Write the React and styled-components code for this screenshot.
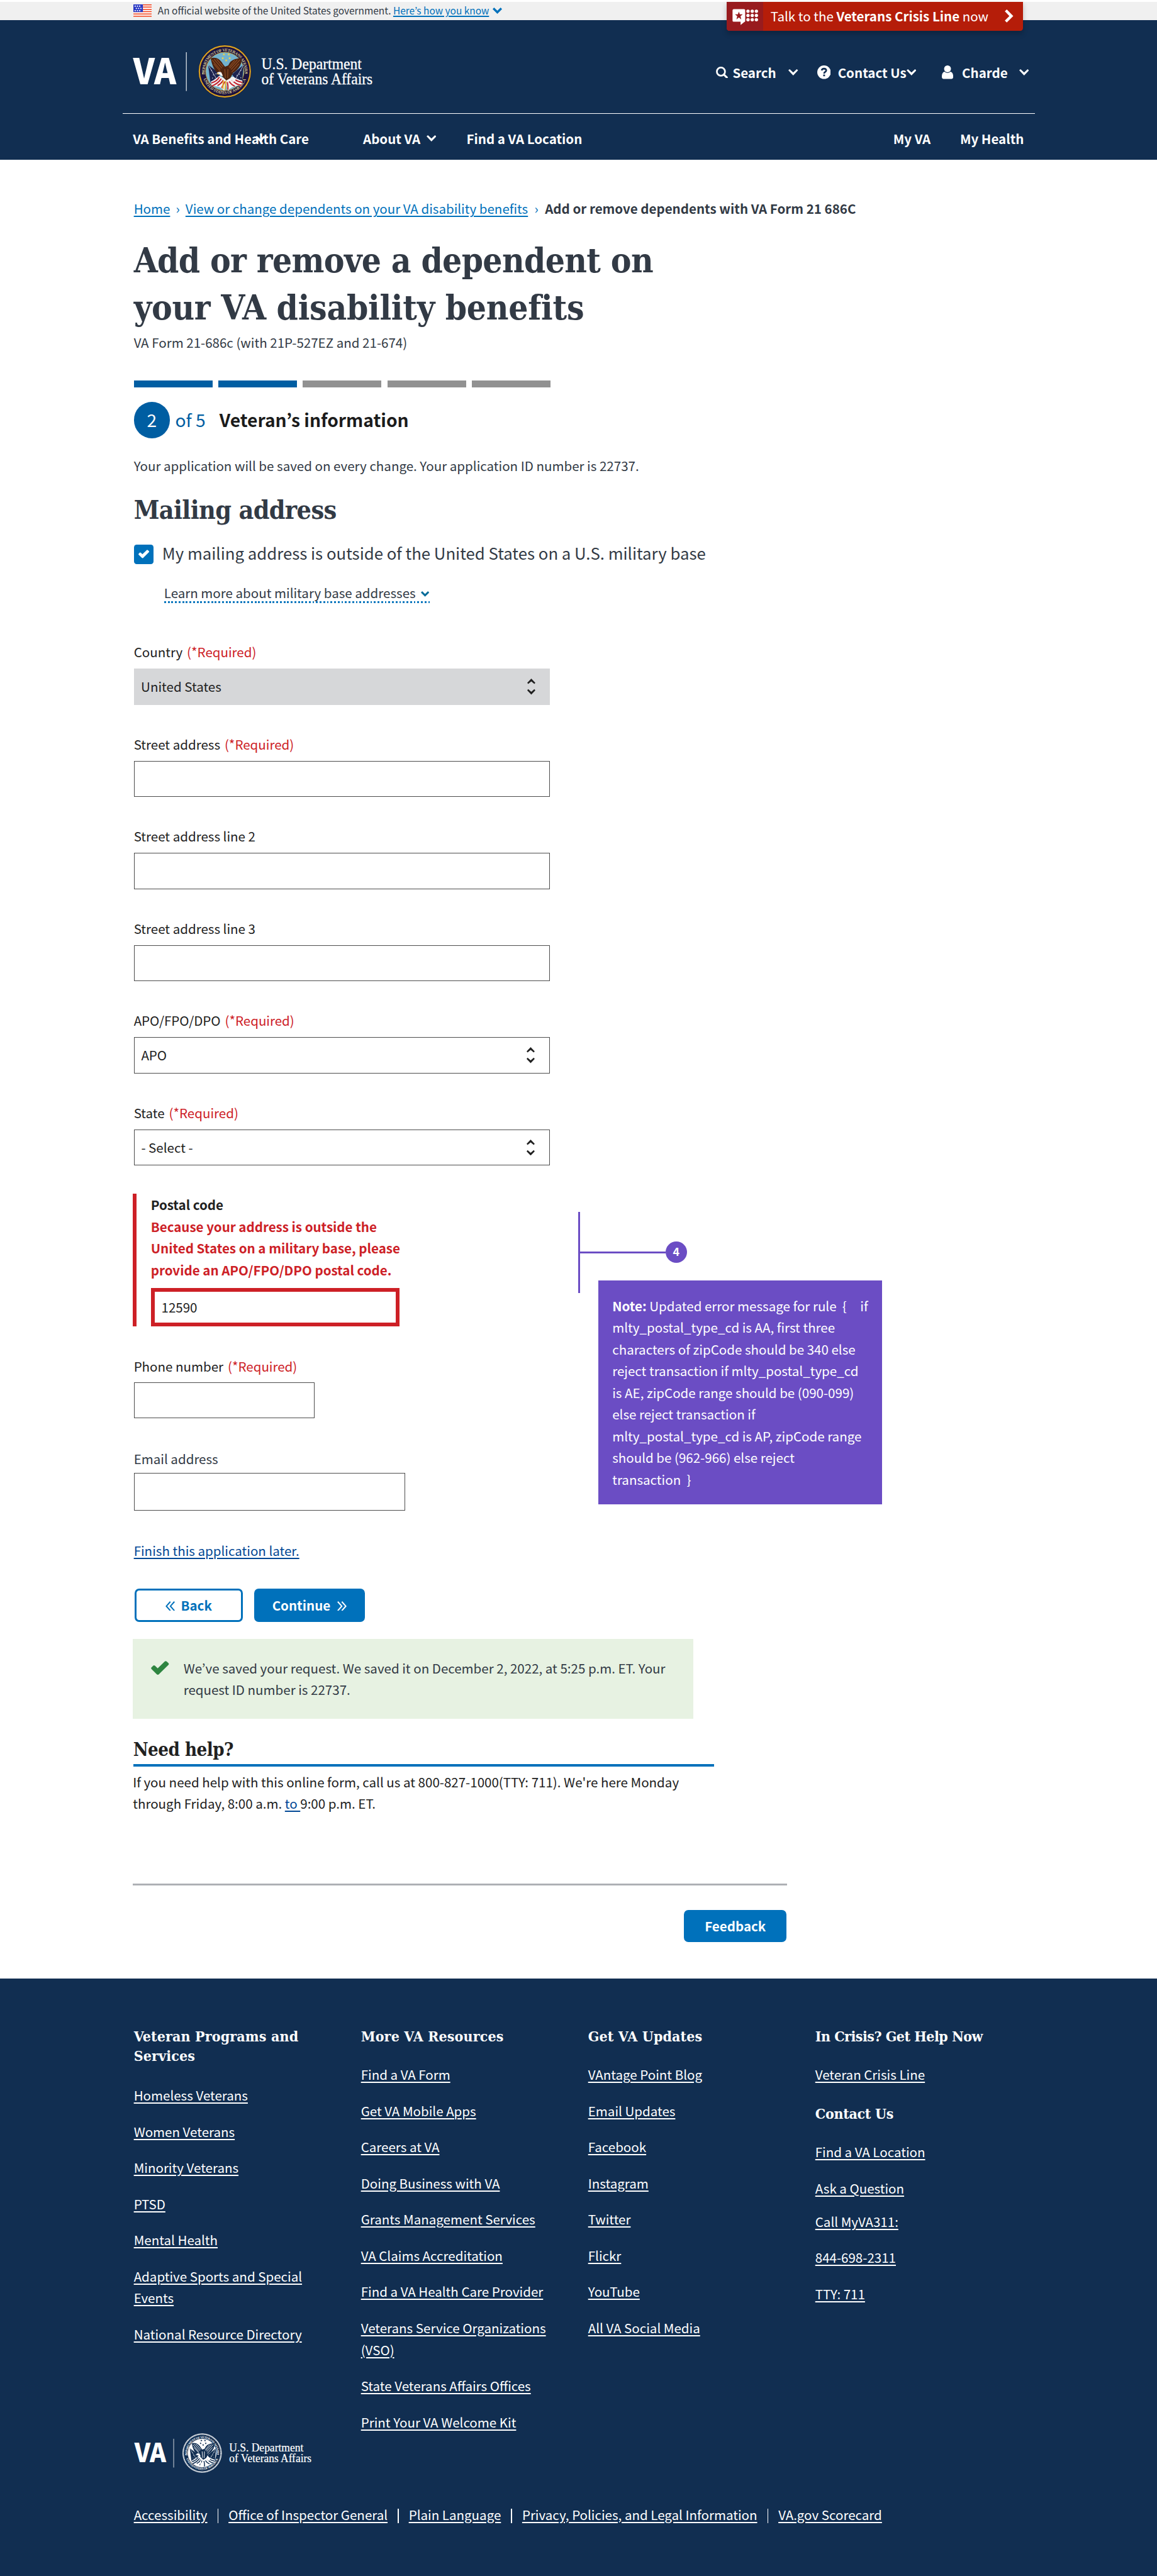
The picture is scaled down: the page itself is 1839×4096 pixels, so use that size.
import React from "react";
import styled, { createGlobalStyle, css } from "styled-components";

/* One rem is ten layout pixels of the 1280-wide page grid. */
const GlobalStyle = createGlobalStyle`
  html { font-size: calc(1839px / 128); }
  body { margin: 0; background: #fff; }
  *, *::before, *::after { box-sizing: border-box; }
`;

const sans = '"Noto Sans CJK KR", "Noto Sans", sans-serif';
const slab = '"DejaVu Serif Condensed", "DejaVu Serif", serif';
const navy = "#112e51";
const blue = "#0071bb";
const ink = "#323a45";
const red = "#cd2026";
const purple = "#6b4dc4";

const Page = styled.div`
  width: 128rem;
  height: 4096px;
  overflow: hidden;
  display: flex;
  flex-direction: column;
  font: 400 1.43rem/2.4rem ${sans};
  color: ${ink};
  white-space: nowrap;
`;

const underlined = css`
  text-decoration: underline;
  text-decoration-thickness: 0.105rem;
  text-underline-offset: 0.19rem;
`;

/* ---------- Official banner ---------- */
const Banner = styled.div`
  flex: none;
  display: flex;
  align-items: center;
  height: 2rem;
  margin-top: 0.2rem;
  padding: 0 0 0.06rem 14.74rem;
  background: #f0f0f0;
  font-size: 1.075rem;
  line-height: 1.8rem;
  svg { display: block; flex: none; }
`;
const BannerText = styled.span`margin-left: 0.7rem; white-space: pre;`;
const BannerLink = styled.a`color: ${blue}; ${underlined} text-underline-offset: 0.12rem; margin-right: 0.4rem;`;

const CrisisLine = styled.a`
  position: absolute;
  top: 0.2rem;
  left: 80.4rem;
  width: 32.8rem;
  height: 3.2rem;
  display: flex;
  align-items: center;
  background: #b51d09;
  color: #fff;
  border-radius: 0 0 0.3rem 0.3rem;
  box-shadow: 0 0.3rem 0.6rem rgba(0, 0, 0, 0.22);
  overflow: hidden;
`;
const CrisisBadge = styled.span`
  width: 4rem;
  height: 100%;
  margin-right: 0.85rem;
  background: #981b1e;
  svg { display: block; }
`;
const CrisisText = styled.span`flex: 1; padding-bottom: 0.06rem;`;
const CrisisArrow = styled.span`margin-right: 1.1rem; svg { display: block; }`;

/* ---------- Header ---------- */
const Header = styled.header`
  flex: none;
  height: 15.5rem;
  background: ${navy};
  color: #fff;
  font-weight: 700;
`;
const Masthead = styled.div`
  display: flex;
  align-items: center;
  height: 10.3rem;
  padding: 1.2rem 0 0 14.7rem;
`;
const Tools = styled.div`display: flex; align-items: center; margin: 0.12rem 0 0 37.9rem;`;
const Tool = styled.a`display: flex; align-items: center; width: ${p => p.$width}rem; svg { display: block; flex: none; }`;
const ToolLabel = styled.span`width: ${p => p.$width}rem; margin-left: ${p => p.$gap}rem; flex: none;`;
const Rule = styled.div`height: 0.11rem; margin: 0 13.5rem 0 13.6rem; background: #fff;`;
const Nav = styled.nav`
  display: flex;
  align-items: center;
  height: 5.1rem;
  padding: 0.35rem 0 0 14.7rem;
`;
const NavItem = styled.a`
  position: relative;
  display: flex;
  align-items: center;
  width: ${p => p.$width}rem;
  flex: none;
`;
const NavLabel = styled.span`width: ${p => p.$width ? p.$width + "rem" : "auto"};`;
const OverlaidChevron = styled.span`position: absolute; left: 13.55rem; top: 0.9rem; svg { display: block; }`;

/* ---------- Main ---------- */
const Main = styled.main`flex: none; height: 201.3rem; padding: 4.17rem 0 0 14.8rem;`;
const Breadcrumbs = styled.div`display: flex; height: 2.4rem;`;
const Crumb = styled.a`color: ${blue}; ${underlined}`;
const CrumbSeparator = styled.span`width: ${p => p.$width}rem; text-align: center; color: ${blue};`;
const CurrentCrumb = styled.span`font-weight: 700;`;
const Title = styled.h1`
  margin: 1.97rem 0 0;
  font: 700 3.8rem/5.2rem ${slab};
`;
const TitleLine = styled.span`display: block; letter-spacing: ${p => p.$tracking}rem;`;
const Subtitle = styled.div`margin-top: 0.03rem;`;
const Progress = styled.div`display: flex; gap: 0.64rem; margin-top: 3.03rem;`;
const Segment = styled.div`width: 8.71rem; height: 0.8rem; background: ${p => p.$done ? "#005ea2" : "#919191"};`;
const StepRow = styled.div`
  display: flex;
  align-items: center;
  margin-top: 1.59rem;
  height: 4rem;
  font-size: 1.965rem;
`;
const StepNumber = styled.span`
  width: 4rem;
  height: 4rem;
  border-radius: 50%;
  background: #005ea2;
  color: #fff;
  line-height: 3.9rem;
  text-align: center;
`;
const StepTotal = styled.span`width: 4.9rem; margin-left: 0.58rem; padding-bottom: 0.1rem; color: #005ea2;`;
const StepTitle = styled.span`font-weight: 700; color: #1b1b1b; padding-bottom: 0.1rem;`;
const SavedNote = styled.div`margin-top: 1.81rem;`;
const SectionTitle = styled.h2`
  margin: 1.83rem 0 0;
  font: 700 2.85rem/4rem ${slab};
  letter-spacing: -0.045rem;
`;
const CheckRow = styled.label`display: flex; align-items: flex-start; height: 2.44rem; margin-top: 1.49rem; font-size: 1.793rem;`;
const CheckBox = styled.span`
  display: flex;
  align-items: center;
  justify-content: center;
  width: 2.2rem;
  height: 2.2rem;
  margin: 0.23rem 0.95rem 0 0;
  border-radius: 0.3rem;
  background: ${blue};
`;
const LearnMore = styled.div`
  display: flex;
  align-items: flex-start;
  justify-content: space-between;
  width: 29.4rem;
  height: 2.36rem;
  margin: 1.93rem 0 4.16rem 3.35rem;
  background: repeating-linear-gradient(90deg, ${blue} 0 0.2rem, transparent 0.2rem 0.4rem) 0 100% / 100% 0.2rem no-repeat;
  svg { display: block; margin: 1.05rem 0.1rem 0 0; }
`;
const Columns = styled.div`display: flex; align-items: flex-start;`;
const Form = styled.div`width: 49.18rem; flex: none; height: 108.7rem;`;
const Field = styled.div`
  display: flex;
  flex-direction: column;
  gap: ${p => p.$gap ?? 0.69}rem;
  margin-bottom: ${p => p.$after ?? 3.11}rem;
`;
const Label = styled.label`height: 2.4rem; padding-top: 0.04rem; color: ${p => p.$muted ? ink : "#212121"};`;
const Required = styled.span`margin-left: 0.48rem; color: ${red};`;
const Control = styled.div`
  display: flex;
  align-items: center;
  justify-content: space-between;
  width: ${p => p.$width ?? 46}rem;
  height: ${p => p.$height ?? 4}rem;
  padding: 0 1.55rem 0.06rem ${p => p.$disabled ? 0.8 : 0.75}rem;
  border: ${p => p.$disabled ? "0" : "1px solid #4c4c4c"};
  background: ${p => p.$disabled ? "#d6d7d9" : "#fff"};
  color: #212121;
  svg { display: block; margin-top: 0.1rem; }
`;
const ErrorField = styled.div`
  display: flex;
  flex-direction: column;
  width: 30rem;
  height: 14.7rem;
  margin: 0.12rem 0 3.18rem -0.08rem;
  padding-left: 1.55rem;
  border-left: 0.42rem solid ${red};
  font-weight: 700;
`;
const ErrorMessage = styled.span`color: ${red}; padding-top: 0.04rem;`;
const ErrorInput = styled.div`
  display: flex;
  align-items: center;
  width: 27.5rem;
  height: 4.19rem;
  margin-top: 0.84rem;
  padding: 0 0 0.05rem 0.75rem;
  border: 0.42rem solid ${red};
  font-weight: 400;
  color: #212121;
`;
const TextLink = styled.a`color: #004795; ${underlined}`;
const Buttons = styled.div`display: flex; gap: 1.24rem; margin: 3.04rem 0 0 0.09rem;`;
const Button = styled.div`
  display: flex;
  align-items: center;
  justify-content: center;
  gap: ${p => p.$gap ?? 0.78}rem;
  width: ${p => p.$width}rem;
  height: ${p => p.$height ?? 3.7}rem;
  border: 0.21rem solid ${blue};
  border-radius: 0.5rem;
  background: ${p => p.$outline ? "#fff" : blue};
  color: ${p => p.$outline ? blue : "#fff"};
  font-weight: 700;
  svg { display: block; margin-top: 0.1rem; }
`;

/* ---------- Annotation ---------- */
const Annotation = styled.aside`padding-top: 63.19rem; color: #fff;`;
const Bracket = styled.div`display: flex; align-items: center; height: 9rem; border-left: 0.21rem solid ${purple};`;
const Connector = styled.div`width: 9.42rem; height: 0.2rem; background: ${purple};`;
const Marker = styled.div`
  width: 2.4rem;
  height: 2.4rem;
  border-radius: 50%;
  background: ${purple};
  font-weight: 700;
  font-size: 1.25rem;
  text-align: center;
  line-height: 2.2rem;
`;
const Note = styled.p`
  width: 31.4rem;
  height: 24.77rem;
  margin: -1.4rem 0 0 2.2rem;
  padding: 1.6rem 0 0 1.56rem;
  background: ${purple};
  white-space: pre;
`;
const RuleKeyword = styled.span`margin-left: 0.22rem;`;

/* ---------- Below the form ---------- */
const Alert = styled.div`
  display: flex;
  align-items: flex-start;
  width: 62rem;
  height: 8.8rem;
  margin: 1.8rem 0 0 -0.1rem;
  padding: 1.98rem 0 0 2rem;
  background: #e7f2e2;
  svg { display: block; flex: none; margin: 0.47rem 1.6rem 0 0; }
`;
const HelpTitle = styled.h3`
  width: 64.3rem;
  margin: 2.04rem 0 0 -0.07rem;
  padding-bottom: 0.21rem;
  border-bottom: 0.31rem solid ${blue};
  font: 700 2.03rem/2.8rem ${slab};
  letter-spacing: -0.035rem;
  color: #212121;
`;
const HelpText = styled.p`margin: 0.45rem 0 0 -0.1rem; color: #212121; white-space: pre;`;
const Divider = styled.div`width: 72.4rem; height: 0.2rem; margin: 7.69rem 0 2.7rem -0.1rem; background: #aeb0b5;`;
const FeedbackRow = styled.div`display: flex; justify-content: flex-end; width: 72.22rem;`;

/* ---------- Footer ---------- */
const Footer = styled.footer`flex: 1; padding: 5.24rem 0 0 14.8rem; background: ${navy}; color: #fff;`;
const FooterGrid = styled.div`display: grid; grid-template-columns: repeat(4, 25.13rem); height: 44.94rem;`;
const FooterColumn = styled.div`display: flex; flex-direction: column; align-items: flex-start;`;
const FooterHeading = styled.h4`
  margin: ${p => p.$spaced ? "0.4rem" : "0"} 0 ${p => p.$after ?? 1.95}rem;
  font: 700 1.6rem/2.2rem ${slab};
  letter-spacing: ${p => p.$tracking ?? 0.01}rem;
  white-space: pre;
`;
const FooterLink = styled.a`${underlined} white-space: pre; margin-bottom: ${p => p.$tight ? 1.3 : 1.605}rem;`;
const FooterLogo = styled.div`margin: 0.15rem 0 3.33rem; height: 4.4rem; svg { display: block; }`;
const LegalLinks = styled.div`display: flex; align-items: center;`;
const LegalLink = styled.a`
  ${underlined}
  & + &::before {
    content: "";
    display: inline-block;
    width: 0.12rem;
    height: 1.6rem;
    margin: 0 1.1rem 0 1.12rem;
    vertical-align: -0.38rem;
    background: #fff;
  }
`;

/* ---------- Drawings ---------- */
const Chevron = ({ w = 1.1, color = "#fff" }) => (
  <svg style={{ width: `${w}rem`, height: `${w * 0.66}rem` }} viewBox="0 0 11 7.2">
    <path d="M0 1.8 1.7 0 5.5 3.7 9.3 0 11 1.8 5.5 7.2z" fill={color} />
  </svg>
);
const NavChevron = () => (
  <svg style={{ width: "1.08rem", height: "0.69rem" }} viewBox="0 0 10.8 6.9">
    <path d="M0 1.3 1.5 0 5.4 3.7 9.3 0 10.8 1.3 5.4 6.9z" fill="#fff" />
  </svg>
);
const UpDown = () => (
  <svg style={{ width: "0.9rem", height: "1.77rem" }} viewBox="0 0 9 17.7" fill="#212121">
    <path d="M0 4.7 4.5 0 9 4.7 7.9 6 4.5 3.1 1.1 6z M0 13 1.1 11.7 4.5 14.600 7.900 11.700 9 13 4.500 17.700z" />
  </svg>
);
const Guillemets = ({ flip }) => (
  <svg style={{ width: "1.05rem", height: "1.1rem" }} viewBox="0 0 10.5 11" fill="none" stroke="currentColor" strokeWidth="1.4">
    <path transform={flip ? "matrix(-1 0 0 1 10.5 0)" : undefined} d="M5.4 .5 1 5.5 5.4 10.5M9.9 .5 5.5 5.5 9.9 10.5" />
  </svg>
);
const Check = ({ w, h, color }) => (
  <svg style={{ width: `${w}rem`, height: `${h}rem` }} viewBox="0 0 20 15.4">
    <path d="M.4 8.9 Q-.3 7.9.5 7.2L2.4 5.3Q3.3 4.5 4.3 5.3L7.4 8.2 15.3.5Q16.3-.3 17.3.5L19.4 2.4Q20.3 3.4 19.4 4.3L8.9 14.7Q7.6 15.9 6.4 14.9z" fill={color} />
  </svg>
);
const Flag = () => (
  <svg style={{ width: "2.02rem", height: "1.36rem" }} viewBox="0 0 20 13.5">
    <path fill="#fff" d="M0 0h20v13.5H0z" />
    <path stroke="#f23a13" strokeWidth="1" d="M0 .5h20M0 3h20M0 5.5h20M0 8h20M0 10.5h20M0 13h20" />
    <path fill="#2636c4" d="M0 0h10.4v8.4H0z" />
    <path stroke="#fff" strokeWidth="1.3" strokeDasharray="1.3 1.2" d="M1.3 1.9h7.6M2.6 4.4h7M1.3 6.8h7.6" />
  </svg>
);
const CrisisIcon = () => (
  <svg style={{ width: "4rem", height: "3.2rem" }} viewBox="0 0 40 32" fill="#fff">
    <path d="M8 8h11.2q1.3 0 1.3 1.3V21q0 1-1 1.2L15.4 25.6V22H7.8q-1.3 0-1.3-1.2V9.3q0-1.3 1.5-1.3z" />
    <path fill="#981b1e" d="M13.5 10.8l1.1 3h3.2l-2.5 2 .9 3.700-2.700-2.200-2.700 2.200.9-3.700-2.500-2h3.200z" />
    {[10.3, 15, 19.7].map(y => [23.6, 28.3, 32.9].map(x => <circle key={x + y} cx={x} cy={y} r="1.85" />))}
  </svg>
);
const SearchIcon = () => (
  <svg style={{ width: "1.3rem", height: "1.3rem" }} viewBox="0 0 13 13" fill="none" stroke="#fff">
    <circle cx="5.5" cy="5.5" r="4.5" strokeWidth="1.9" />
    <path d="M8.7 8.7 12 12" strokeWidth="2.2" strokeLinecap="round" />
  </svg>
);
const HelpIcon = () => (
  <svg style={{ width: "1.5rem", height: "1.5rem" }} viewBox="0 0 15 15">
    <circle cx="7.5" cy="7.5" r="7.5" fill="#fff" />
    <path d="M4.9 5.5Q5.3 3.500 7.500 3.500 9.900 3.600 9.900 5.500 9.900 6.500 8.700 7.200 7.600 7.900 7.600 9.100" fill="none" stroke={navy} strokeWidth="1.9" />
    <path d="M6.6 10.1h2v1.9h-2z" fill={navy} />
  </svg>
);
const PersonIcon = () => (
  <svg style={{ width: "1.26rem", height: "1.5rem" }} viewBox="0 0 12.6 15" fill="#fff">
    <circle cx="6.3" cy="3.8" r="3.8" />
    <path d="M3 7Q6.3 9.8 9.6 7 12.6 7.600 12.600 12.600 12.600 15 10.600 15H2Q0 15 0 12.600 0 7.600 3 7z" />
  </svg>
);
const CrisisChevron = () => (
  <svg style={{ width: "0.95rem", height: "1.45rem" }} viewBox="0 0 9 14" fill="#fff"><path d="M2.1 0 9 7 2.1 14 0 12 4.9 7 0 2z" /></svg>
);

const Seal = ({ mono, id }) => {
  const c = mono
    ? { rim: "#fff", ring: navy, text: "#fff", sky: "#fff", wing: navy, wing2: "#fff", head: "#fff", flag: navy, red: navy, star: navy, white: "#fff", gold: "#fff" }
    : { rim: "#d9a520", ring: "#1b1140", text: "#d8c98c", sky: "#72b2cf", wing: "#4d2411", wing2: "#8a4a22", head: "#f4f4f4", flag: "#1d2450", red: "#c1202c", star: "#f0d24a", white: "#f2f2f2", gold: "#e5b22b" };
  const star = (x, y) => (
    <path key={x} transform={`translate(${x} ${y})`} d="M0-9 2.6-2.8 9-2.8 4 1.2 6 8 0 4-6 8-4 1.2-9-2.8-2.6-2.8z" fill={c.star} />
  );
  return (
    <g>
      <circle cx="56" cy="56" r="56" fill={c.ring} />
      <circle cx="56" cy="56" r="53.8" fill="none" stroke={c.rim} strokeWidth={mono ? 3.4 : 2.8} strokeDasharray={mono ? "2.4 1" : undefined} />
      {mono && <circle cx="56" cy="56" r="55.5" fill="none" stroke="#fff" strokeWidth="1" />}
      <circle cx="56" cy="56" r="40.5" fill={c.sky} stroke={c.rim} strokeWidth="1" />
      <path id={`${id}t`} d="M14.7 64.5a42.2 42.2 0 1 1 82.6 0" fill="none" />
      <path id={`${id}b`} d="M8.8 64A47.9 47.9 0 0 0 103.2 64" fill="none" />
      <g fill={c.text} fontFamily="Liberation Serif, serif" fontWeight="700" fontSize="8.6">
        <text><textPath href={`#${id}t`} startOffset="2" textLength="144" lengthAdjust="spacing">DEPARTMENT OF VETERANS AFFAIRS</textPath></text>
        <text><textPath href={`#${id}b`} startOffset="8" textLength="117" lengthAdjust="spacing">UNITED STATES OF AMERICA</textPath></text>
      </g>
      <circle cx="9.6" cy="59.5" r="1.2" fill={c.text} />
      <circle cx="102.4" cy="59.5" r="1.2" fill={c.text} />
      <g transform="scale(.333) translate(-18 -30)">
        {[[180, 90], [211, 90], [173, 114], [217, 114], [195, 128]].map(([x, y]) => star(x, y))}
        <path d="M80 156 95 268 132 268 158 214z" fill={c.flag} />
        <path d="M306 156 296 262 262 262 232 216z" fill={c.flag} />
        <path d="M80 156 150 272M306 156 240 272" stroke={c.white} strokeWidth="3" />
        <path d="M100 190l4 4M112 218l4 4M106 238l4 4M128 212l4 4M122 246l4 4M286 190l4 4M276 214l4 4M286 236l4 4M262 222l4 4M268 246l4 4" stroke={mono ? "#fff" : "#cfd8ee"} strokeWidth="5" />
        <path d="M98 262Q130 248 150 226L196 250 182 322Q160 286 104 292z" fill={c.white} />
        <path d="M298 256Q262 248 240 232L192 252 206 322Q226 288 290 288z" fill={c.white} />
        <path d="M100 272Q136 262 152 234M104 290Q142 276 164 244M140 288Q164 276 176 254M166 302Q176 284 186 262M296 268Q262 262 244 244M290 286Q254 280 232 252M250 292Q226 282 214 262M206 314Q208 290 202 266" fill="none" stroke={c.red} strokeWidth="8" />
        <path d="M97 116Q112 108 136 114 160 124 176 154L188 168 208 160Q222 128 250 120L290 112Q296 134 284 160 268 190 238 208L222 240 196 256 176 236 152 214Q112 196 97 116z" fill={c.wing} />
        <path d="M106 126 158 186M118 120 168 178M134 120 176 168M282 124 226 186M266 124 218 178M250 126 212 172M116 150 160 200M276 150 230 202M186 184 190 240M206 184 204 240" fill="none" stroke={c.wing2} strokeWidth="5" />
        <path d="M136 208Q146 196 164 204L174 226Q162 230 154 218L140 216z" fill={c.head} />
        <path d="M222 236Q244 226 256 246 250 266 236 264z" fill={c.head} />
        <path d="M134 210 148 210 144 220z" fill={c.gold} />
        <path d="M172 258 180 256 178 312 170 306zM188 258 196 258 194 310 186 318z" fill={c.gold} />
      </g>
    </g>
  );
};

const Logo = ({ mono, id, scale }) => (
  <svg style={{ width: `${26.6 * scale}rem`, height: `${5.95 * scale}rem` }} viewBox="0 0 266 59.5">
    <text x=".6" y="43.6" fill="#fff" fontFamily={sans} fontWeight="900" fontSize="39.6" textLength="47.5" lengthAdjust="spacingAndGlyphs">VA</text>
    <path d="M59.3 8.3v43" stroke="#fff" strokeWidth=".9" opacity=".85" />
    <g transform="translate(72.5 .3) scale(.524)"><Seal mono={mono} id={id} /></g>
    <g fill="#fff" stroke="#fff" strokeWidth=".2" fontFamily="Liberation Serif, serif" fontWeight="400" fontSize="17.2">
      <text x="142.3" y="27" textLength="111" lengthAdjust="spacingAndGlyphs">U.S. Department</text>
      <text x="142.3" y="43.6" textLength="123" lengthAdjust="spacingAndGlyphs">of Veterans Affairs</text>
    </g>
  </svg>
);

/* ---------- Composed parts ---------- */
const FieldBlock = ({ label, required, muted, children, ...box }) => (
  <Field {...box}>
    <Label $muted={muted}>{label}{required && <Required>(*Required)</Required>}</Label>
    {children}
  </Field>
);
const Links = ({ items }) => items.map(t => <FooterLink key={t}>{t}</FooterLink>);

export default function App() {
  return (
    <Page>
      <GlobalStyle />
      <Banner>
        <Flag />
        <BannerText>An official website of the United States government. </BannerText>
        <BannerLink>Here’s how you know</BannerLink>
        <Chevron w={1.05} color={blue} />
      </Banner>
      <CrisisLine>
        <CrisisBadge><CrisisIcon /></CrisisBadge>
        <CrisisText>Talk to the <b>Veterans Crisis Line</b> now</CrisisText>
        <CrisisArrow><CrisisChevron /></CrisisArrow>
      </CrisisLine>

      <Header>
        <Masthead>
          <Logo id="top" scale={1} />
          <Tools>
            <Tool $width={11.2}><SearchIcon /><ToolLabel $gap={0.55} $width={6.17}>Search</ToolLabel><NavChevron /></Tool>
            <Tool $width={13.8}><HelpIcon /><ToolLabel $gap={0.79} $width={7.59}>Contact Us</ToolLabel><NavChevron /></Tool>
            <Tool $width={10}><PersonIcon /><ToolLabel $gap={0.97} $width={6.3}>Charde</ToolLabel><NavChevron /></Tool>
          </Tools>
        </Masthead>
        <Rule />
        <Nav>
          <NavItem $width={25.46}>VA Benefits and Health Care<OverlaidChevron><NavChevron /></OverlaidChevron></NavItem>
          <NavItem $width={11.45}><NavLabel $width={7.01}>About VA</NavLabel><NavChevron /></NavItem>
          <NavItem $width={47.21}>Find a VA Location</NavItem>
          <NavItem $width={7.39}>My VA</NavItem>
          <NavItem $width={8}>My Health</NavItem>
        </Nav>
      </Header>

      <Main>
        <Breadcrumbs>
          <Crumb>Home</Crumb>
          <CrumbSeparator $width={1.7}>›</CrumbSeparator>
          <Crumb>View or change dependents on your VA disability benefits</Crumb>
          <CrumbSeparator $width={1.88}>›</CrumbSeparator>
          <CurrentCrumb>Add or remove dependents with VA Form 21 686C</CurrentCrumb>
        </Breadcrumbs>
        <Title>
          <TitleLine $tracking={-0.045}>Add or remove a dependent on</TitleLine>
          <TitleLine $tracking={-0.018}>your VA disability benefits</TitleLine>
        </Title>
        <Subtitle>VA Form 21-686c (with 21P-527EZ and 21-674)</Subtitle>
        <Progress>{[1, 2, 3, 4, 5].map(n => <Segment key={n} $done={n <= 2} />)}</Progress>
        <StepRow>
          <StepNumber>2</StepNumber>
          <StepTotal>of 5</StepTotal>
          <StepTitle>Veteran’s information</StepTitle>
        </StepRow>
        <SavedNote>Your application will be saved on every change. Your application ID number is 22737.</SavedNote>
        <SectionTitle>Mailing address</SectionTitle>
        <CheckRow>
          <CheckBox><Check w={1.2} h={0.96} color="#fff" /></CheckBox>
          My mailing address is outside of the United States on a U.S. military base
        </CheckRow>
        <LearnMore>Learn more about military base addresses<Chevron w={0.92} color="#046b99" /></LearnMore>

        <Columns>
          <Form>
            <FieldBlock label="Country" required><Control $disabled>United States<UpDown /></Control></FieldBlock>
            <FieldBlock label="Street address" required><Control /></FieldBlock>
            <FieldBlock label="Street address line 2"><Control /></FieldBlock>
            <FieldBlock label="Street address line 3"><Control /></FieldBlock>
            <FieldBlock label="APO/FPO/DPO" required><Control>APO<UpDown /></Control></FieldBlock>
            <FieldBlock label="State" required><Control>- Select -<UpDown /></Control></FieldBlock>
            <ErrorField>
              <Label>Postal code</Label>
              <ErrorMessage>Because your address is outside the<br />United States on a military base, please<br />provide an APO/FPO/DPO postal code.</ErrorMessage>
              <ErrorInput>12590</ErrorInput>
            </ErrorField>
            <FieldBlock label="Phone number" required $gap={0.62} $after={3.17}><Control $width={20} /></FieldBlock>
            <FieldBlock label="Email address" muted $gap={0.43} $after={3.2}><Control $width={30} $height={4.2} /></FieldBlock>
            <TextLink>Finish this application later.</TextLink>
            <Buttons>
              <Button $outline $width={11.97} $gap={0.66}><Guillemets />Back</Button>
              <Button $width={12.3}>Continue<Guillemets flip /></Button>
            </Buttons>
          </Form>
          <Annotation>
            <Bracket><Connector /><Marker>4</Marker></Bracket>
            <Note>
              <b>Note:</b>{" Updated error message for rule  {    "}<RuleKeyword>if</RuleKeyword>{"\nmlty_postal_type_cd is AA, first three\ncharacters of zipCode should be 340 else\nreject transaction if mlty_postal_type_cd\nis AE, zipCode range should be (090-099)\nelse reject transaction if\nmlty_postal_type_cd is AP, zipCode range\nshould be (962-966) else reject\ntransaction  }"}
            </Note>
          </Annotation>
        </Columns>

        <Alert>
          <Check w={2} h={1.53} color="#2e8540" />
          <span>We’ve saved your request. We saved it on December 2, 2022, at 5:25 p.m. ET. Your<br />request ID number is 22737.</span>
        </Alert>
        <HelpTitle>Need help?</HelpTitle>
        <HelpText>
          {"If you need help with this online form, call us at 800-827-1000(TTY: 711). We're here Monday\nthrough Friday, 8:00 a.m. "}
          <TextLink>to </TextLink>9:00 p.m. ET.
        </HelpText>
        <Divider />
        <FeedbackRow><Button $width={11.34} $height={3.6}>Feedback</Button></FeedbackRow>
      </Main>

      <Footer>
        <FooterGrid>
          <FooterColumn>
            <FooterHeading $after={2.03}>{"Veteran Programs and\nServices"}</FooterHeading>
            <Links items={["Homeless Veterans", "Women Veterans", "Minority Veterans", "PTSD", "Mental Health", "Adaptive Sports and Special\nEvents", "National Resource Directory"]} />
          </FooterColumn>
          <FooterColumn>
            <FooterHeading>More VA Resources</FooterHeading>
            <Links items={["Find a VA Form", "Get VA Mobile Apps", "Careers at VA", "Doing Business with VA", "Grants Management Services", "VA Claims Accreditation", "Find a VA Health Care Provider", "Veterans Service Organizations\n(VSO)", "State Veterans Affairs Offices", "Print Your VA Welcome Kit"]} />
          </FooterColumn>
          <FooterColumn>
            <FooterHeading>Get VA Updates</FooterHeading>
            <Links items={["VAntage Point Blog", "Email Updates", "Facebook", "Instagram", "Twitter", "Flickr", "YouTube", "All VA Social Media"]} />
          </FooterColumn>
          <FooterColumn>
            <FooterHeading $tracking={-0.035}>In Crisis? Get Help Now</FooterHeading>
            <Links items={["Veteran Crisis Line"]} />
            <FooterHeading $spaced $tracking={-0.02}>Contact Us</FooterHeading>
            <Links items={["Find a VA Location"]} />
            <FooterLink $tight>Ask a Question</FooterLink>
            <Links items={["Call MyVA311:", "844-698-2311", "TTY: 711"]} />
          </FooterColumn>
        </FooterGrid>
        <FooterLogo><Logo mono id="foot" scale={0.74} /></FooterLogo>
        <LegalLinks>
          {["Accessibility", "Office of Inspector General", "Plain Language", "Privacy, Policies, and Legal Information", "VA.gov Scorecard"].map(t => <LegalLink key={t}>{t}</LegalLink>)}
        </LegalLinks>
      </Footer>
    </Page>
  );
}
